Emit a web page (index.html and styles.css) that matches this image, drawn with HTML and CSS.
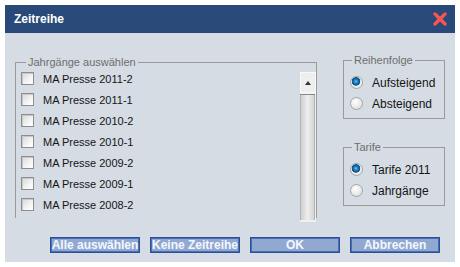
FILE: index.html
```html
<!DOCTYPE html>
<html lang="de">
<head>
  <meta charset="UTF-8">
  <title>Zeitreihe</title>
  <link rel="stylesheet" href="styles.css">
</head>
<body>

  <div class="dialog">
    <div class="titlebar">
      <span class="title">Zeitreihe</span>
      <svg class="close" width="14" height="14" viewBox="0 0 14 14">
        <path d="M2 2 L12 12 M12 2 L2 12" stroke="#f75454" stroke-width="3.4" stroke-linecap="round"/>
      </svg>
    </div>

    <div class="dialog-body">
      <div class="main">
        <fieldset class="group years">
          <legend>Jahrgänge auswählen</legend>
          <div class="list">
            <ul class="rows">
              <li><span class="check"></span>MA Presse 2011-2</li>
              <li><span class="check"></span>MA Presse 2011-1</li>
              <li><span class="check"></span>MA Presse 2010-2</li>
              <li><span class="check"></span>MA Presse 2010-1</li>
              <li><span class="check"></span>MA Presse 2009-2</li>
              <li><span class="check"></span>MA Presse 2009-1</li>
              <li><span class="check"></span>MA Presse 2008-2</li>
            </ul>
            <div class="scrollbar">
              <div class="scroll-up"><span class="arrow"></span></div>
              <div class="scroll-thumb"></div>
            </div>
          </div>
        </fieldset>

        <div class="side">
          <fieldset class="group options">
            <legend>Reihenfolge</legend>
            <div class="option"><span class="radio checked"></span>Aufsteigend</div>
            <div class="option"><span class="radio"></span>Absteigend</div>
          </fieldset>

          <fieldset class="group options">
            <legend>Tarife</legend>
            <div class="option"><span class="radio checked"></span>Tarife 2011</div>
            <div class="option"><span class="radio"></span>Jahrgänge</div>
          </fieldset>
        </div>
      </div>

      <div class="actions">
        <button>Alle auswählen</button>
        <button>Keine Zeitreihe</button>
        <button>OK</button>
        <button>Abbrechen</button>
      </div>
    </div>
  </div>

</body>
</html>
```

FILE: styles.css
```css
/* Page */
body {
  margin: 0;
  background: #fff;
  font-family: "Liberation Sans", Arial, sans-serif;
}

.dialog {
  margin: 5px;
  width: 450px;
  height: 257px;
  background: #d5dce4;
  display: flex;
  flex-direction: column;
}

/* Title bar */
.titlebar {
  height: 28px;
  background: #294a78;
  display: flex;
  align-items: center;
  justify-content: space-between;
  padding: 0 8px 0 9px;
}

.title {
  color: #fff;
  font-size: 12px;
  font-weight: bold;
}

/* Body */
.dialog-body {
  flex: 1;
  display: flex;
  flex-direction: column;
  padding: 21px 10px 9px 10px;
}

.main {
  display: flex;
  justify-content: space-between;
  align-items: flex-start;
}

.group {
  margin: 0;
  min-width: 0;
  border: 1px solid #9a9a9a;
}

.group legend {
  padding: 0 2px;
  font-size: 11px;
  line-height: 12px;
  color: #6e6e6e;
}

/* Year list */
.years {
  width: 302px;
  box-sizing: border-box;
  margin-top: 2px;
  padding: 0 0 0 5px;
  border-bottom: none;
}

.years legend {
  margin-left: 5px;
}

.list {
  display: flex;
  height: 150px;
}

.rows {
  flex: 1;
  list-style: none;
  margin: 0;
  padding: 0;
}

.rows li {
  height: 21px;
  display: flex;
  align-items: center;
  gap: 9px;
  font-size: 11px;
  color: #151515;
}

.check {
  width: 13px;
  height: 13px;
  box-sizing: border-box;
  border: 1px solid #8e8e8e;
  background: linear-gradient(135deg, #d6d6d6, #f4f4f4 60%, #fff);
  box-shadow: inset 1px 1px 0 #c8c8c8;
}

/* Scrollbar */
.scrollbar {
  width: 16px;
  height: 150px;
  margin-top: 4px;
  background: #eef0f2;
  display: flex;
  flex-direction: column;
}

.scroll-up {
  height: 21px;
  box-sizing: border-box;
  border: 1px solid #f8f8f8;
  background: #eeeeee;
  display: flex;
  justify-content: center;
  align-items: center;
}

.arrow {
  width: 0;
  height: 0;
  border-left: 3px solid transparent;
  border-right: 3px solid transparent;
  border-bottom: 4px solid #333;
}

.scroll-thumb {
  height: 125px;
  margin: 1px 1px 0 0;
  border-top: 1px solid #8a8a8a;
  background: linear-gradient(to right, #9a9a9a 0, #cfcfcf 1px, #eeeeee 50%, #d4d4d4 calc(100% - 1px), #8c8c8c 100%);
}

/* Right side options */
.side {
  width: 102px;
  display: flex;
  flex-direction: column;
  gap: 22px;
}

.options {
  padding: 6px 0 4px 6px;
}

.options legend {
  margin-left: 2px;
}

.option {
  height: 21px;
  display: flex;
  align-items: center;
  gap: 9px;
  font-size: 12px;
  color: #151515;
}

.radio {
  width: 13px;
  height: 13px;
  box-sizing: border-box;
  border-radius: 50%;
  border: 1px solid #a4a4a4;
  background: radial-gradient(circle at 40% 35%, #fff, #e4e4e4 70%, #cfcfcf);
}

.radio.checked {
  background: radial-gradient(circle at 45% 40%, #7ec3ec 0, #1a7bc0 2px, #0d4f86 4px, #e6e6e6 4.5px, #f6f6f6 100%);
}

/* Buttons */
.actions {
  margin-top: auto;
  display: flex;
  justify-content: flex-end;
  gap: 10px;
  padding-right: 5px;
}

.actions button {
  width: 90px;
  height: 16px;
  padding: 0;
  border: 1px solid #2a4f9c;
  box-shadow: inset 0 0 0 1px #4a6db3;
  background: #91a9d1;
  color: #f4f7ff;
  font-family: "Liberation Sans", Arial, sans-serif;
  font-size: 12px;
  font-weight: bold;
  line-height: 12px;
}
```
